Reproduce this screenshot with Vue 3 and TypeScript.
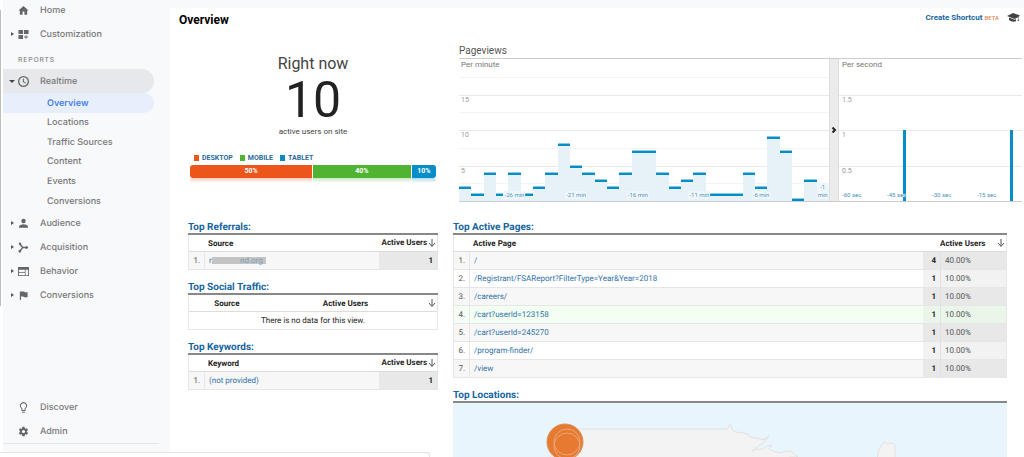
<script setup lang="ts">
interface NavItem {
  label: string
  icon: string
}

interface PageRow {
  path: string
  users: number
  share: string
  fresh?: boolean
}

const reportSections: NavItem[] = [
  { label: 'Audience', icon: 'person' },
  { label: 'Acquisition', icon: 'branch' },
  { label: 'Behavior', icon: 'window' },
  { label: 'Conversions', icon: 'flag' },
]
const realtimeViews: string[] = ['Locations', 'Traffic Sources', 'Content', 'Events', 'Conversions']
const footerItems: NavItem[] = [
  { label: 'Discover', icon: 'bulb' },
  { label: 'Admin', icon: 'gear' },
]
const icons: Record<string, string> = {
  home: 'M10 21v-7h4v7h6v-9h3L12 2 1 12h3v9z',
  custom: 'M1 2h10v9H1zM13 2h10v9H13zM1 13h10v9H1zM16.500 13.500h2v3h3v2h-3v3h-2v-3h-3v-2h3z',
  clock: 'M12 0a12 12 0 1 0 0 24 12 12 0 0 0 0-24zm0 21.200a9.200 9.200 0 1 1 0-18.400 9.200 9.200 0 0 1 0 18.400zM13 6h-2.300v7l5.500 3.500 1.200-1.900-4.400-2.700z',
  person: 'M12 11.500a4.800 4.800 0 1 0 0-9.600 4.800 4.800 0 0 0 0 9.600zM12 13.500c-4 0-10 2-10 5.500v2.500h20V19c0-3.500-6-5.500-10-5.500z',
  branch: 'M4 1a3 3 0 0 1 2.800 4l4.200 5.500h5.300a3 3 0 1 1 0 3H11L6.800 19A3 3 0 1 1 4.300 17.200L8.300 12 4.300 6.900A3 3 0 0 1 4 1z',
  window: 'M0 2h24v20H0zM2 8v12h20V8zM2 13h13v1.500H2zM15 8h1.500v12H15z',
  flag: 'M14.400 5L14 3H4v19h2.500v-8h5.600l.4 2H21V5z',
  bulb: 'M9 21.500h6v2H9zM12 0a8 8 0 0 0-4.500 14.600V19.500h9v-4.900A8 8 0 0 0 12 0zm2.500 13.500V17.500h-5v-4a5.800 5.800 0 1 1 5 0z',
  gear: 'M19.400 13a7.500 7.500 0 0 0 0-2l2.600-2-2.500-4.300-3 1.200a7.600 7.600 0 0 0-1.700-1L14.300 1.500h-4.900L9 4.900a7.600 7.600 0 0 0-1.700 1l-3-1.200L1.800 9l2.600 2a7.500 7.500 0 0 0 0 2l-2.600 2 2.500 4.300 3-1.200a7.600 7.600 0 0 0 1.700 1l.4 3.400h4.900l.5-3.400a7.600 7.600 0 0 0 1.700-1l3 1.200L22 15zM12 15.500a3.500 3.500 0 1 1 0-7 3.500 3.500 0 0 1 0 7z',
}

const devices = [
  { name: 'DESKTOP', share: 50, tone: 'orange' },
  { name: 'MOBILE', share: 40, tone: 'green' },
  { name: 'TABLET', share: 10, tone: 'blue' },
]

const perMinute: number[] = [2, 1, 4, 1, 4, 1, 2, 4, 8, 5, 4, 3, 2, 4, 7, 7, 4, 2, 3, 4, 1, 1, 1, 4, 2, 9, 7, 0, 3, 1]
const minuteLabels: Record<number, string> = { 4: '-26 min', 9: '-21 min', 14: '-16 min', 19: '-11 min', 24: '-6 min', 29: '-1 min' }
const perSecond: number[] = Array.from({ length: 60 }, (_, i) => (i === 21 || i === 56 ? 1 : 0))
const secondLabels: string[] = ['-60 sec', '-45 sec', '-30 sec', '-15 sec']

const activePages: PageRow[] = [
  { path: '/', users: 4, share: '40.00%' },
  { path: '/Registrant/FSAReport?FilterType=Year&Year=2018', users: 1, share: '10.00%' },
  { path: '/careers/', users: 1, share: '10.00%' },
  { path: '/cart?userId=123158', users: 1, share: '10.00%', fresh: true },
  { path: '/cart?userId=245270', users: 1, share: '10.00%' },
  { path: '/program-finder/', users: 1, share: '10.00%' },
  { path: '/view', users: 1, share: '10.00%' },
]
const arrow = 'M4 0v7M1 4l3 3.500 3-3.500'
</script>

<template>
  <div class="shell">
    <div class="rail"></div>
    <nav class="sidebar" aria-label="Reports">
      <a class="item first" href="#home">
        <span class="caret"></span>
        <svg class="icon" viewBox="0 0 24 24"><path :d="icons.home" /></svg>Home
      </a>
      <a class="item" href="#customization">
        <span class="caret closed"></span>
        <svg class="icon" viewBox="0 0 24 24"><path :d="icons.custom" /></svg>Customization
      </a>
      <h2 class="group">REPORTS</h2>
      <a class="item open" href="#realtime">
        <span class="caret opened"></span>
        <svg class="icon" viewBox="0 0 24 24"><path :d="icons.clock" fill-rule="evenodd" /></svg>Realtime
      </a>
      <a class="sub current" href="#overview">Overview</a>
      <div class="subs">
        <a v-for="view in realtimeViews" :key="view" class="sub" href="#view">{{ view }}</a>
      </div>
      <a v-for="item in reportSections" :key="item.label" class="item" href="#section">
        <span class="caret closed"></span>
        <svg class="icon" viewBox="0 0 24 24"><path :d="icons[item.icon]" fill-rule="evenodd" /></svg>{{ item.label }}
      </a>
      <div class="foot">
        <a v-for="item in footerItems" :key="item.label" class="item" href="#footer">
          <span class="caret"></span>
          <svg class="icon" viewBox="0 0 24 24"><path :d="icons[item.icon]" fill-rule="evenodd" /></svg>{{ item.label }}
        </a>
      </div>
    </nav>

    <main class="main">
      <header class="head">
        <h1>Overview</h1>
        <div class="tools">
          <a href="#shortcut">Create Shortcut</a><sup>BETA</sup>
          <svg class="cap" viewBox="0 0 26 18">
            <path d="M12 0L26 5 23 7.500v5l1 3.500h-3l1-3.500V8.500L15 12 0 6z" />
            <path d="M4 9v5q6 5 14 2.500V12l-3 1.500z" />
          </svg>
        </div>
      </header>

      <div class="top">
        <section class="now">
          <h2>Right now</h2>
          <strong class="count">10</strong>
          <p>active users on site</p>
          <ul class="legend">
            <li v-for="d in devices" :key="d.name"><i :class="d.tone"></i>{{ d.name }}</li>
          </ul>
          <div class="split">
            <span v-for="d in devices" :key="d.name" :class="d.tone" :style="{ flexGrow: d.share }">{{ d.share }}%</span>
          </div>
          <div class="split mirror">
            <span v-for="d in devices" :key="d.name" :class="d.tone" :style="{ flexGrow: d.share }"></span>
          </div>
        </section>

        <section class="views">
          <h2>Pageviews</h2>
          <div class="charts">
            <div class="chart minute">
              <div class="lines">
                <span>Per minute</span><span>15</span><span>10</span><span>5</span>
              </div>
              <div class="bars">
                <div v-for="(value, i) in perMinute" :key="i" class="slot">
                  <div class="bar" :style="{ height: value * 5 + '%' }"></div>
                </div>
              </div>
              <div class="bars">
                <div v-for="(value, i) in perMinute" :key="i" class="slot">
                  <span v-if="minuteLabels[i]" class="time" :class="{ wrap: i === 29 }">{{ minuteLabels[i] }}</span>
                </div>
              </div>
            </div>
            <button class="fold" type="button" aria-label="Collapse">
              <svg viewBox="0 0 6 6"><path d="M1.500 .5L4 3 1.500 5.500" /></svg>
            </button>
            <div class="chart second">
              <div class="lines">
                <span>Per second</span><span>1.5</span><span>1</span><span>0.5</span>
              </div>
              <div class="bars">
                <div v-for="(value, i) in perSecond" :key="i" class="slot">
                  <div v-if="value" class="tick" :style="{ height: value * 50 + '%' }"></div>
                </div>
              </div>
              <div class="seconds">
                <span v-for="label in secondLabels" :key="label">{{ label }}</span>
              </div>
            </div>
          </div>
        </section>
      </div>

      <div class="bottom">
        <div class="stack">
          <section>
            <h3><a href="#referrals">Top Referrals:</a></h3>
            <table>
              <thead>
                <tr><th class="no"></th><th>Source</th><th class="end users">Active Users<svg class="sort" viewBox="0 0 8 9"><path :d="arrow" /></svg></th></tr>
              </thead>
              <tbody>
                <tr><td class="no">1.</td><td><a href="#source">r<span class="redacted">nd.org</span></a></td><td class="metric">1</td></tr>
              </tbody>
            </table>
          </section>
          <section>
            <h3><a href="#social">Top Social Traffic:</a></h3>
            <table>
              <thead>
                <tr><th class="mid narrow">Source</th><th class="wide"><span class="centered">Active Users<svg class="sort" viewBox="0 0 8 9"><path :d="arrow" /></svg></span></th></tr>
              </thead>
              <tbody>
                <tr class="plain"><td class="mid" colspan="2">There is no data for this view.</td></tr>
              </tbody>
            </table>
          </section>
          <section>
            <h3><a href="#keywords">Top Keywords:</a></h3>
            <table>
              <thead>
                <tr><th class="no"></th><th>Keyword</th><th class="end users">Active Users<svg class="sort" viewBox="0 0 8 9"><path :d="arrow" /></svg></th></tr>
              </thead>
              <tbody>
                <tr><td class="no">1.</td><td><a href="#keyword">(not provided)</a></td><td class="metric">1</td></tr>
              </tbody>
            </table>
          </section>
        </div>

        <div class="stack">
          <section>
            <h3><a href="#pages">Top Active Pages:</a></h3>
            <table>
              <thead>
                <tr><th class="no"></th><th>Active Page</th><th class="tiny"></th><th class="share"><span class="spread">Active Users<svg class="sort" viewBox="0 0 8 9"><path :d="arrow" /></svg></span></th></tr>
              </thead>
              <tbody>
                <tr v-for="(row, i) in activePages" :key="row.path" :class="{ fresh: row.fresh }">
                  <td class="no">{{ i + 1 }}.</td>
                  <td><a href="#page">{{ row.path }}</a></td>
                  <td class="metric">{{ row.users }}</td>
                  <td class="percent">{{ row.share }}</td>
                </tr>
              </tbody>
            </table>
          </section>
          <section>
            <h3><a href="#locations">Top Locations:</a></h3>
            <svg class="map" viewBox="0 0 554 260" role="img" aria-label="Map of active users">
              <path class="land" d="M112 26H275l1-4h2l1 5 4 2 8 1 5 2 1 2 10 2 6 1-6 5-8 6 5-2 3 1 8-4 4-1-3 4 4 2 6 2 4-1 8-1 3 3 4 3-8 0-6 2-2 8 5 40-60 70-170 10-55-40z" />
              <path class="land" d="M311 36l5-3-2 3z" />
              <path class="land" d="M424 56l2-10 5-7 4 2 4-1 3 2v14l-4 30-10-8z" />
              <circle class="pin" cx="112" cy="39" r="18" />
              <circle class="ring" cx="114" cy="39" r="13" />
              <circle class="ring" cx="114" cy="43" r="13" />
            </svg>
          </section>
        </div>
      </div>
    </main>
    <div class="status"></div>
  </div>
</template>

<style>
body {
  margin: 0;
}
</style>

<style scoped>
.shell {
  position: relative;
  display: flex;
  height: 100vh;
  overflow: hidden;
  background: #f8f9fb;
  color: #222;
  font-family: Roboto, "Liberation Sans", sans-serif;
  font-size: 8px;
}
.shell * {
  box-sizing: border-box;
}
h1, h2, h3, p, ul {
  margin: 0;
  padding: 0;
  font-weight: 400;
}
a {
  color: #3272a8;
  text-decoration: none;
}
.rail {
  flex: 0 0 3px;
  background: #fff linear-gradient(#bdbdbd, #bdbdbd) 0 10px / 1px 296px no-repeat;
}

/* Sidebar */
.sidebar {
  display: flex;
  flex: 0 0 167px;
  flex-direction: column;
  padding-right: 16px;
  font-family: Inter, "Open Sans", sans-serif;
  font-size: 9px;
  text-rendering: geometricPrecision;
}
.item {
  display: flex;
  flex: none;
  align-items: center;
  height: 24px;
  color: #777;
  font-weight: 500;
}
.first {
  margin-top: -2px;
}
.open {
  background: #e7e8eb;
  border-radius: 0 12px 12px 0;
}
.caret {
  width: 15px;
  height: 5px;
}
.caret::before {
  content: "";
  display: block;
  width: 0;
  margin-left: 8px;
}
.closed::before {
  border: solid transparent;
  border-width: 2px 0 2px 3px;
  border-left-color: #555;
}
.opened::before {
  margin: 1px 0 0 6px;
  border: solid transparent;
  border-width: 3px 3px 0;
  border-top-color: #444;
}
.icon {
  width: 11px;
  height: 11px;
  margin-right: 11px;
  fill: #666;
}
.group {
  flex: none;
  height: 23px;
  padding-left: 15px;
  color: #777;
  font-family: Roboto, sans-serif;
  font-size: 7px;
  line-height: 28px;
  letter-spacing: 1px;
}
.sub {
  display: flex;
  flex: 1;
  align-items: center;
  padding-left: 44px;
  color: #777;
  font-weight: 500;
}
.current {
  flex: 0 0 20px;
  background: #e7effd;
  border-radius: 0 10px 10px 0;
  color: #4a80ec;
  font-weight: 600;
}
.subs {
  display: flex;
  flex: 0 0 98px;
  flex-direction: column;
}
.foot {
  margin: auto -5px 13px 0;
  border-bottom: 1px solid #e4e5e7;
}

/* Main column */
.main {
  flex: 1;
  min-width: 0;
  margin-top: 8px;
  background: #fff;
}
.head {
  display: flex;
  justify-content: space-between;
  height: 36px;
  padding: 0 4px 0 9px;
}
.head h1 {
  color: #000;
  font-size: 12px;
  font-weight: 700;
  line-height: 24px;
}
.tools {
  display: flex;
  align-items: center;
  height: 19px;
}
.tools a {
  color: #15659f;
  font-size: 8px;
  font-weight: 700;
}
.tools sup {
  margin-left: 2px;
  color: #e08a55;
  font-size: 6px;
  font-weight: 500;
  line-height: 8px;
}
.cap {
  width: 13px;
  height: 9px;
  margin-left: 8px;
  fill: #444;
}
.top {
  display: grid;
  grid-template-columns: 250fr 563fr;
  gap: 21px;
  padding: 0 2px 0 18px;
}
.now {
  display: flex;
  flex-direction: column;
  padding: 9px 2px 0;
  text-align: center;
}
.now h2 {
  color: #444;
  font-size: 16px;
  line-height: 22px;
}
.count {
  font-size: 50px;
  font-weight: 400;
  line-height: 50px;
}
.now p {
  color: #444;
  line-height: 13px;
}
.legend {
  display: flex;
  gap: 7px;
  margin-top: 15px;
  padding-left: 4px;
  color: #2a6c9e;
  font-size: 7px;
  font-weight: 700;
  line-height: 10px;
  list-style: none;
}
.legend li {
  display: flex;
  align-items: center;
  gap: 3px;
}
.legend i {
  width: 5px;
  height: 6px;
}
.split {
  display: flex;
  gap: 1px;
  height: 13px;
  margin-top: 2px;
  border-radius: 3px;
  overflow: hidden;
  color: #fff;
  font-size: 7px;
  font-weight: 700;
  line-height: 12px;
}
.split span {
  flex: 1 1 0;
}
.mirror {
  height: 5px;
  margin-top: 0;
  opacity: .3;
  mask-image: linear-gradient(#000, transparent);
}
.orange {
  background: #ed561b;
}
.green {
  background: #50b432;
}
.blue {
  background: #058dc7;
}
.views h2 {
  color: #555;
  font-size: 10px;
  line-height: 14px;
}
.charts {
  display: grid;
  grid-template-columns: 370fr 10px 183fr;
  height: 144px;
  border: solid #ccc;
  border-width: 1px 0;
}
.chart {
  position: relative;
}
.lines, .bars {
  position: absolute;
  inset: 0;
  display: flex;
}
.lines {
  flex-direction: column;
}
.lines span {
  flex: 1;
  padding: 0 2px;
  border-top: 1px solid #e9e9e9;
  color: #999;
  font-size: 7px;
  line-height: 9px;
}
.lines span:first-child {
  border-top-color: transparent;
  color: #777;
  font-size: 8px;
}
.minute .lines span {
  background: linear-gradient(#f4f4f4, #f4f4f4) 0 50% / 100% 1px no-repeat;
}
.second .lines span {
  padding-left: 3px;
}
.slot {
  position: relative;
  display: flex;
  flex: 1 1 0;
  align-items: flex-end;
  min-width: 0;
}
.bar {
  width: 100%;
  min-height: 2px;
  border-top: 2px solid #058dc7;
  background: #e6f2f8;
  box-shadow: 0 -1px #8cc9e5;
}
.time, .seconds {
  color: #3f8fc0;
  font-size: 6px;
  line-height: 8px;
  text-shadow: 0 0 1px #fff, 0 0 1px #fff, 1px 0 1px #fff, -1px 0 1px #fff;
}
.time {
  position: absolute;
  bottom: 2px;
  left: 50%;
  translate: -50%;
  padding: 0 1px;
  background: #eef6fa;
  white-space: nowrap;
}
.wrap {
  width: 12px;
  padding: 0;
  text-align: center;
  white-space: normal;
}
.tick {
  width: 3px;
  background: #058dc7;
}
.seconds {
  position: absolute;
  inset: auto 0 2px 3px;
  display: grid;
  grid-template-columns: repeat(4, 1fr);
}
.fold {
  display: grid;
  place-items: center;
  padding: 0;
  border: solid #ddd;
  border-width: 0 1px;
  background: #ebebeb;
}
.fold svg {
  width: 6px;
  height: 6px;
  fill: none;
  stroke: #222;
  stroke-width: 2;
}

/* Tables */
.bottom {
  display: grid;
  grid-template-columns: 250fr 554fr;
  gap: 15px;
  padding: 18px 17px 0 18px;
  text-rendering: geometricPrecision;
}
.stack {
  display: flex;
  flex-direction: column;
  gap: 10px;
}
h3 {
  height: 15px;
  border-bottom: 2px solid #888;
  font-size: 10px;
  line-height: 15px;
}
h3 a {
  color: #15659f;
  font-weight: 700;
}
table {
  width: 100%;
  border-collapse: separate;
  border-spacing: 0;
  border: solid #e6e6e6;
  border-width: 0 1px;
  table-layout: fixed;
}
th {
  height: 17px;
  padding: 0 3px;
  border-bottom: 1px solid #ddd;
  font-weight: 700;
  text-align: left;
}
td {
  height: 18px;
  padding: 0 4px;
  border-bottom: 1px solid #e6e6e6;
  background: #f7f7f7;
}
tr:nth-child(even) td, .plain td {
  background: #fff;
}
.no {
  width: 16px;
  padding: 0 4px 0 0;
  border-right: 1px solid #e6e6e6;
  color: #555;
  text-align: right;
}
th.no {
  border-right: 0;
}
.end {
  padding-right: 1px;
  text-align: right;
}
.users {
  width: 58px;
  padding-left: 0;
  white-space: nowrap;
}
.narrow {
  width: 27%;
  padding-left: 12px;
}
.wide {
  padding: 0 1px 0 8px;
}
.centered {
  display: grid;
  grid-template-columns: 1fr auto;
  text-align: center;
}
.mid {
  text-align: center;
}
td.metric, td.percent {
  background: #e8e8e8;
}
td.metric {
  font-weight: 700;
  text-align: right;
}
td.percent {
  border-left: 1px solid #e0e0e0;
  color: #555;
}
tr:nth-child(even) td.metric, tr:nth-child(even) td.percent {
  background: #f2f2f2;
}
tr.fresh td {
  background: #f2fff2;
}
tr.fresh td.metric, tr.fresh td.percent {
  background: #eaf6ea;
}
.tiny {
  width: 17px;
}
.share {
  width: 66px;
  padding: 0 1px 0 0;
}
.spread {
  display: flex;
  justify-content: space-between;
}
.sort {
  width: 8px;
  height: 9px;
  margin-left: 1px;
  vertical-align: middle;
  fill: none;
  stroke: #555;
}
.redacted {
  display: inline-block;
  width: 54px;
  height: 7px;
  padding-right: 3px;
  background: #c4c4c4;
  color: #7f9fb8;
  line-height: 7px;
  text-align: right;
  vertical-align: middle;
}
.map {
  display: block;
  width: 100%;
  background: #e8f5fd;
}
.land {
  fill: #f3f3f3;
  stroke: #e2e2e2;
}
.pin {
  fill: #e67a30;
  stroke: #d9925f;
}
.ring {
  fill: none;
  stroke: #eba77a;
}
.status {
  position: absolute;
  bottom: 0;
  left: 0;
  width: 42%;
  height: 5px;
  border: solid #e2e2e2;
  border-width: 1px 1px 0 0;
  border-radius: 0 3px 0 0;
  background: #fff;
}
</style>
